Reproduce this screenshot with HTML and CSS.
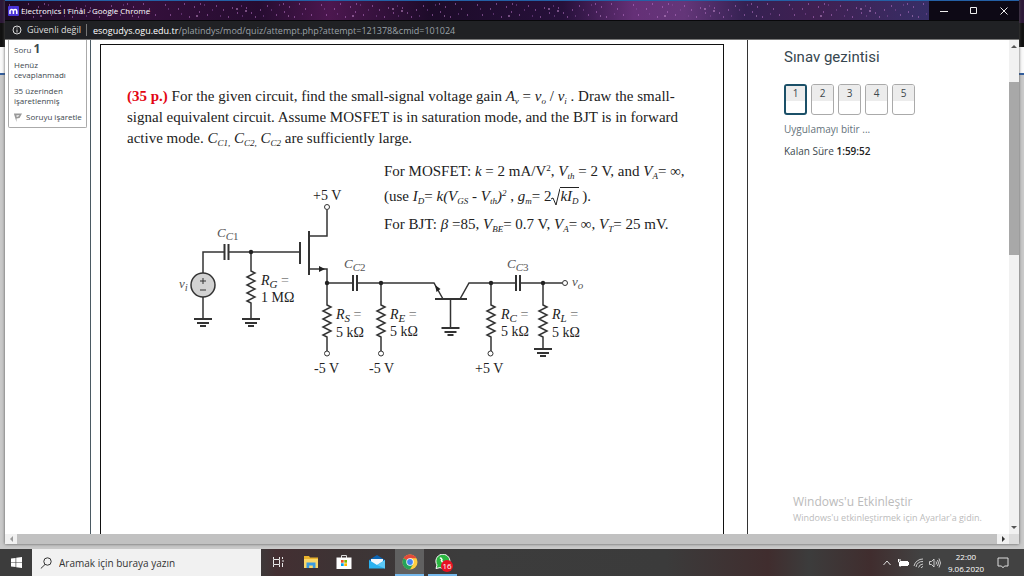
FILE: index.html
```html
<!DOCTYPE html>
<html lang="tr">
<head>
<meta charset="utf-8">
<title>Electronics I Final - Google Chrome</title>
<link rel="stylesheet" href="styles.css">
</head>
<body>
<div class="desktop">
  <div class="stage">
    <div class="window">
      <header class="titlebar">
        <svg class="stars" width="100%" height="19" aria-hidden="true">
          <defs>
            <pattern id="sky" width="156" height="19" patternUnits="userSpaceOnUse">
              <path d="M4 4h1M9 14h1M17 8h1M23 3h1M28 16h1M33 6h1M38 11h1M39 3h1M46 14h1M55 5h1M62 9h1M67 16h1M71 7h1M76 12h1M85 7h1M90 12h1M94 16h1M99 9h1M106 5h1M115 14h1M122 3h1M123 11h1M128 6h1M133 16h1M138 3h1M144 8h1M150 14h1" stroke="#c077cd" stroke-width="1"/>
              <path d="M7 8h1M20 13h1M43 4h1M51 9h1M59 15h1M80 5h1M81 15h1M102 15h1M110 9h1M118 4h1M141 13h1" stroke="#8a4f9e" stroke-width="1"/>
              <path d="M75 8h2M84 10h2M35 15h2M127 15h1" stroke="#c98fd0" stroke-width="1"/>
            </pattern>
          </defs>
          <rect width="100%" height="19" fill="url(#sky)"/>
        </svg>
        <svg class="favicon" viewBox="0 0 11 10" aria-hidden="true"><rect width="11" height="10" rx="1" fill="#4a35d8"/><path d="M2 8V5.300a1.700 1.700 0 0 1 3.400 0V8M5.400 5.300a1.700 1.700 0 0 1 3.400 0V8" fill="none" stroke="#fff" stroke-width="1.500"/></svg>
        <h1 class="window-title">Electronics I Final - Google Chrome</h1>
        <div class="window-buttons">
          <button type="button" aria-label="Minimize"><svg viewBox="0 0 8 8"><path d="M0 4.500h8"/></svg></button>
          <button type="button" aria-label="Maximize"><svg viewBox="0 0 8 8"><path d="M.5 .5h6v6h-6z"/></svg></button>
          <button type="button" aria-label="Close"><svg viewBox="0 0 8 8"><path d="M.5 .5l7 7M7.500 .5l-7 7"/></svg></button>
        </div>
      </header>
      <div class="addressbar">
        <svg class="info" viewBox="0 0 10 10" aria-hidden="true"><circle cx="5" cy="5" r="4" fill="none" stroke="#dcdcdc"/><path d="M5 4.500v3M5 2.500v1" stroke="#dcdcdc"/></svg>
        <span class="insecure">Güvenli değil</span>
        <span class="url"><b>esogudys.ogu.edu.tr</b>/platindys/mod/quiz/attempt.php?attempt=121378&amp;cmid=101024</span>
      </div>
      <div class="viewport">
        <aside class="info-column">
          <div class="info-card">
            <h2 class="question-no">Soru <strong>1</strong></h2>
            <p>Henüz cevaplanmadı</p>
            <p>35 üzerinden işaretlenmiş</p>
            <a class="flag" href="#flag"><svg viewBox="0 0 8 9" aria-hidden="true"><path d="M0 0.500h8L5.500 5 2.500 5.500V9L0 1z" fill="#999"/><path d="M2.500 2h3L4 4H2.500z" fill="#ddd"/></svg>Soruyu işaretle</a>
          </div>
        </aside>
        <main class="question-column">
          <article class="paper">
            <p class="prompt"><strong>(35 p.)</strong> For the given circuit, find the small-signal voltage gain <i>A<sub>v</sub></i> = <i>v<sub>o</sub></i> / <i>v<sub>i</sub></i> . Draw the small-<br>signal equivalent circuit. Assume MOSFET is in saturation mode, and the BJT is in forward<br>active mode. <i>C<sub>C1,</sub></i> <i>C<sub>C2,</sub></i> <i>C<sub>C2</sub></i> are sufficiently large.</p>
            <div class="figure">
              <svg class="circuit" viewBox="127 149 500 236" role="img" aria-label="Circuit">
                <defs>
                  <g id="gnd"><path d="M-9 0H9M-6 4H6M-3 7H3" stroke-width="2"/></g>
                </defs>
                <g class="wire">
                  <path d="M203 273V252H224M229 252H299M203 297V319"/>
                  <path d="M224.500 244V260M228.500 244V260M353 275V291M357 275V291M516 275V291M520 275V291" stroke-width="2"/>
                  <path d="M300 242V264M309 231V275" stroke-width="2"/>
                  <path d="M327 210V236H309M309 269H327V283H353M357 283H434L443 299M460 299L469 283H516M520 283H562"/>
                  <path d="M435 299H467" stroke-width="2"/>
                  <path d="M450.500 299V328"/>
                  <path d="M251 252V271l4 2-8 4 8 4-8 4 8 4-8 4 8 4-8 4 4 2V319"/>
                  <path d="M327 283V305l4 2-8 4 8 4-8 4 8 4-8 4 8 4-8 4 4 2V351"/>
                  <path d="M381 283V305l4 2-8 4 8 4-8 4 8 4-8 4 8 4-8 4 4 2V351"/>
                  <path d="M491 283V305l4 2-8 4 8 4-8 4 8 4-8 4 8 4-8 4 4 2V351"/>
                  <path d="M543 283V305l4 2-8 4 8 4-8 4 8 4-8 4 8 4-8 4 4 2V349"/>
                  <use href="#gnd" x="203" y="319"/><use href="#gnd" x="251" y="319"/><use href="#gnd" x="450.500" y="328"/><use href="#gnd" x="543" y="349"/>
                  <circle cx="203" cy="285" r="12" fill="#d2d2d2"/>
                  <path d="M200 281H206M203 278V284M200 290H206" stroke-width="1"/>
                  <g fill="#fff" stroke-width="1"><circle cx="327" cy="207" r="2.500"/><circle cx="327" cy="353.500" r="2.500"/><circle cx="381" cy="353.500" r="2.500"/><circle cx="490.500" cy="353.500" r="2.500"/><circle cx="565" cy="283" r="2.500"/></g>
                  <g fill="#222" stroke="none"><circle cx="251" cy="252" r="2.200"/><circle cx="327" cy="283" r="2.200"/><circle cx="381" cy="283" r="2.200"/><circle cx="491" cy="283" r="2.200"/><circle cx="543" cy="283" r="2.200"/><path d="M325 269l-6-3v6zM435 285l5.500 4-4 3z"/></g>
                </g>
                <g class="label">
                  <text x="313" y="200">+5 V</text><text x="314" y="373">-5 V</text><text x="369" y="373">-5 V</text><text x="475" y="373">+5 V</text>
                  <text x="261" y="285"><tspan class="it">R</tspan><tspan class="it sm" dy="3">G</tspan><tspan class="eq" dy="-3"> =</tspan></text><text x="261" y="302">1 MΩ</text>
                  <text x="336" y="319"><tspan class="it">R</tspan><tspan class="it sm" dy="3">S</tspan><tspan class="eq" dy="-3"> =</tspan></text><text x="336" y="337">5 kΩ</text>
                  <text x="390" y="319"><tspan class="it">R</tspan><tspan class="it sm" dy="3">E</tspan><tspan class="eq" dy="-3"> =</tspan></text><text x="390" y="336">5 kΩ</text>
                  <text x="501" y="319"><tspan class="it">R</tspan><tspan class="it sm" dy="3">C</tspan><tspan class="eq" dy="-3"> =</tspan></text><text x="501" y="336">5 kΩ</text>
                  <text x="552" y="319"><tspan class="it">R</tspan><tspan class="it sm" dy="3">L</tspan><tspan class="eq" dy="-3"> =</tspan></text><text x="552" y="337">5 kΩ</text>
                </g>
                <g class="label soft">
                  <text x="217" y="237"><tspan class="it">C</tspan><tspan class="it sm" dy="3">C</tspan><tspan class="sm">1</tspan></text>
                  <text x="344" y="268"><tspan class="it">C</tspan><tspan class="it sm" dy="3">C</tspan><tspan class="sm">2</tspan></text>
                  <text x="507" y="268"><tspan class="it">C</tspan><tspan class="it sm" dy="3">C</tspan><tspan class="sm">3</tspan></text>
                  <text x="179" y="288"><tspan class="it">v</tspan><tspan class="it sm" dy="3">i</tspan></text>
                  <text x="572" y="286"><tspan class="it">v</tspan><tspan class="it sm" dy="3">o</tspan></text>
                </g>
              </svg>
              <div class="formulas">
                <p>For MOSFET: <i>k</i> = 2 mA/V<sup>2</sup>, <i>V<sub>th</sub></i> = 2 V, and <i>V<sub>A</sub></i>= ∞,</p>
                <p>(use <i>I<sub>D</sub></i>= <i>k(V<sub>GS</sub></i> - <i>V<sub>th</sub>)<sup>2</sup></i> , <i>g<sub>m</sub></i>= 2<svg class="radical" viewBox="0 0 9 18" aria-hidden="true"><path d="M0 11l2-1 3 7L9 .5" fill="none" stroke="#222"/></svg><span class="radicand"><i>kI<sub>D</sub></i></span> ).</p>
                <p>For BJT: <i>β</i> =85, <i>V<sub>BE</sub></i>= 0.7 V, <i>V<sub>A</sub></i>= ∞, <i>V<sub>T</sub></i>= 25 mV.</p>
              </div>
            </div>
          </article>
        </main>
        <aside class="quiz-nav">
          <h2>Sınav gezintisi</h2>
          <nav class="pages">
            <a class="page current" href="#q1"><span>1</span></a>
            <a class="page" href="#q2"><span>2</span></a>
            <a class="page" href="#q3"><span>3</span></a>
            <a class="page" href="#q4"><span>4</span></a>
            <a class="page" href="#q5"><span>5</span></a>
          </nav>
          <a class="finish" href="#finish">Uygulamayı bitir ...</a>
          <p class="timer">Kalan Süre <b>1:59:52</b></p>
          <div class="watermark"><p class="big">Windows'u Etkinleştir</p><p>Windows'u etkinleştirmek için Ayarlar'a gidin.</p></div>
        </aside>
        <div class="vscroll"><i class="arrow up"></i><div class="vtrack"><div class="vthumb"></div></div><i class="arrow down"></i></div>
      </div>
      <div class="hscroll"><span class="hbutton"><i class="arrow left"></i></span><span class="hthumb"></span><span class="hbutton"><i class="arrow right"></i></span><span class="corner"></span></div>
    </div>
  </div>
  <footer class="taskbar">
    <button class="start" type="button" aria-label="Start"><svg viewBox="0 0 12 12"><path d="M0 1.700L5 1v4.600H0zM5.700.9L12 0v5.600H5.700zM0 6.300h5V11l-5-.7zM5.700 6.300H12V12l-6.300-.9z" fill="#fff"/></svg></button>
    <label class="search"><svg viewBox="0 0 12 12" aria-hidden="true"><circle cx="7.500" cy="4.500" r="3.700"/><path d="M5 7.500L.8 11.500"/></svg><input type="text" placeholder="Aramak için buraya yazın" aria-label="Aramak için buraya yazın"></label>
    <div class="apps">
      <button type="button" aria-label="Task view"><svg viewBox="0 0 16 16"><path d="M3.500 3v2.500h6V3M3.500 13v-2.500h6V13M3.500 6v4M9.500 6v4M12.500 3v2M12.500 9v4M12 7h2" fill="none" stroke="#e8e8e8"/></svg></button>
      <button type="button" aria-label="Explorer"><svg viewBox="0 0 16 16"><path d="M1 2h5l1 1.500h8V14H1z" fill="#e9b22c"/><path d="M1 5h14v9H1z" fill="#fbd768"/><path d="M3.500 14V8.500h9V14h-2.700v-2.500H6.200V14z" fill="#3b9be0"/></svg></button>
      <button type="button" aria-label="Store"><svg viewBox="0 0 16 16"><path d="M5.500 4V1.500h5V4" fill="none" stroke="#ddd"/><path d="M.5 3.500h15V15h-15z" fill="#fff"/><path d="M5 6h2.700v2.700H5z" fill="#f25022"/><path d="M8.300 6H11v2.700H8.300z" fill="#7fba00"/><path d="M5 9.300h2.700V12H5z" fill="#00a4ef"/><path d="M8.300 9.300H11V12H8.300z" fill="#ffb900"/></svg></button>
      <button type="button" aria-label="Mail"><svg viewBox="0 0 16 16"><path d="M0 6l8-5 8 5v8H0z" fill="#0b65b5"/><path d="M2 5h12v6H2z" fill="#f3f8fc"/><path d="M0 6l8 5 8-5v8.500H0z" fill="#2bb2f0"/><path d="M8 11l8-5v8.500z" fill="#5cc9f7"/></svg></button>
      <button type="button" class="open active" aria-label="Chrome"><svg viewBox="0 0 16 16"><circle cx="8" cy="8" r="7.500" fill="#ffcd40"/><path d="M8 8L1.500 4.250A7.500 7.500 0 0 1 14.500 4.250H8z" fill="#e24a3b"/><path d="M8 8L1.500 4.250A7.500 7.500 0 0 0 8 15.500L11.200 10z" fill="#26a35a"/><circle cx="8" cy="8" r="3.700" fill="#fff"/><circle cx="8" cy="8" r="2.900" fill="#4285f4"/></svg></button>
      <button type="button" class="open" aria-label="WhatsApp"><svg viewBox="0 0 16 16"><path d="M1 14.500L2 11A7 7 0 1 1 5 13.600z" fill="#2bb741" stroke="#fff"/><path d="M5 4.500c1-1 1.500 0 2 1.200l-.6 1c.7 1.200 1.500 2 2.700 2.500" fill="none" stroke="#fff" stroke-width="1.500"/></svg><span class="badge">16</span></button>
    </div>
    <div class="tray">
      <svg class="chevron" viewBox="0 0 8 8" aria-label="Hidden icons"><path d="M.5 6L4 2l3.500 4" fill="none" stroke="#ddd"/></svg>
      <svg viewBox="0 0 12 12" aria-label="Battery"><path d="M3 4h8v5H3zM11 5h1v3h-1z" fill="#fff"/><path d="M1 3h3M1.500 2v3h1V9H4" fill="none" stroke="#fff"/></svg>
      <svg viewBox="0 0 12 12" aria-label="Network"><path d="M1 9A9 9 0 0 1 10 2M3 10a7 7 0 0 1 7-5.500M5.500 10.500A5 5 0 0 1 10 7M8 11a3 3 0 0 1 2-1.500" fill="none" stroke="#ccc"/></svg>
      <svg viewBox="0 0 12 12" aria-label="Volume"><path d="M.5 4.500h2L5 2v8L2.500 7.500h-2zM7 4.500q1 1.500 0 3M8.500 3q2 3 0 6M10 1.500q3 4.500 0 9" fill="none" stroke="#ccc"/></svg>
      <time class="clock">22:00<br>9.06.2020</time>
      <svg class="notes" viewBox="0 0 12 12" aria-label="Notifications"><path d="M1 1h10v8H7.500L6 10.800 4.500 9H1z" fill="none" stroke="#ddd"/></svg>
    </div>
  </footer>
</div>
</body>
</html>
```

FILE: styles.css
```css
* { box-sizing: border-box; }
body, h1, h2, p { margin: 0; }
body { font-family: "Open Sans", "Noto Sans", sans-serif; font-size: 10px; color: #3c474d; }
button { border: 0; padding: 0; background: none; font: inherit; color: inherit; }
a { color: inherit; text-decoration: none; }
svg { display: block; flex: none; }

.desktop { display: flex; flex-direction: column; height: 100vh; overflow: hidden; }
.stage {
  flex: 1; min-height: 0; display: flex; padding: 0 5px 5px;
  background: linear-gradient(#2d1938 0 23px, #111 23px 47px, #fafafa 47px 73px, #315d9e 73px 75px, #c9c9c9 75px);
}
.window { flex: 1; min-width: 0; display: flex; flex-direction: column; background: #fff; box-shadow: 0 0 3px #555; }

.titlebar {
  position: relative; flex: none; display: flex; align-items: center; height: 20px; padding-left: 3px;
  border-top: 1px solid #2460a5;
  background: linear-gradient(90deg, #1c0a24, #35103c 13%, #260c30 25%, #4c174f 32%, #1d0b29 42%, #26103a 55%, #653077 62%, #643679 67%, #352152 73%, #402052 80%, #372e66 91%, #251b3c);
}
.stars { position: absolute; inset: 0; }
.favicon { position: relative; width: 11px; height: 10px; }
.window-title { position: relative; margin-left: 2px; font-size: 8px; font-weight: 400; line-height: 12px; color: #fff; flex: 1; }
.window-buttons { position: relative; display: flex; height: 19px; background: #0d0915; }
.window-buttons button { width: 30px; display: grid; place-items: center; }
.window-buttons svg { width: 8px; height: 8px; fill: none; stroke: #eee; }

.addressbar {
  flex: none; display: flex; align-items: center; height: 20px; padding-left: 7px;
  background: #202124; border-top: 1px solid #08080a; border-bottom: 1px solid #777; color: #9aa0a6; font-size: 9px; white-space: nowrap;
}
.info { width: 10px; height: 10px; }
.insecure { margin-left: 5px; padding-right: 5px; border-right: 1px solid #777; line-height: 12px; color: #ddd; }
.url { margin-left: 6px; }
.url b { font-weight: 400; color: #fff; }

.viewport { flex: 1; min-height: 0; display: grid; grid-template-columns: 86px 1fr 261px 10px; overflow: hidden; }
.info-column { padding: 0 3px; border-right: 1px solid #4b5a63; }
.info-card { height: 88px; padding: 2px 5px; border: 1px solid #aaa; border-top: 0; border-radius: 0 0 2px 2px; font-size: 8px; line-height: 10px; }
.info-card p { margin-bottom: 6px; }
.question-no { margin-bottom: 3px; font-size: 8px; font-weight: 400; line-height: 14px; }
.question-no strong { font-size: 12px; }
.flag { display: flex; align-items: center; gap: 4px; white-space: nowrap; }
.flag svg { width: 8px; height: 9px; }

.question-column { min-width: 0; display: flex; padding: 4px 23px 0 9px; border-right: 1px solid #333; }
.paper { flex: 1; min-width: 0; padding: 41px 20px 0 26px; border: solid #111; border-width: 1px 1px 0; font-family: "Liberation Serif", serif; font-size: 15px; color: #222; }
.prompt { line-height: 21px; white-space: nowrap; }
.prompt strong { color: #e30613; }
sub, sup { font-size: 9px; line-height: 0; }
sub { vertical-align: -3px; }
sup { vertical-align: 5px; }
.figure { display: grid; }
.circuit { grid-area: 1 / 1; width: 500px; height: 236px; }
.wire { fill: none; stroke: #333; stroke-width: 1.5; }
.label { fill: #222; font-size: 14px; }
.label .it { font-style: italic; }
.label .sm { font-size: 11px; }
.label .eq { fill: #777; }
.soft { fill: #555; font-size: 13px; }
.formulas { grid-area: 1 / 1; z-index: 1; display: flex; flex-direction: column; gap: 3px; align-items: flex-start; padding: 11px 0 0 257px; line-height: 22px; white-space: nowrap; }
.formulas p:last-child { margin-top: 3px; }
.radical { display: inline-block; width: 9px; height: 18px; vertical-align: -5px; }
.radicand { display: inline-block; line-height: 17px; border-top: 1px solid #222; }

.quiz-nav { position: relative; padding: 8px 0 0 36px; }
.quiz-nav h2 { font-family: Roboto, sans-serif; font-size: 15px; font-weight: 400; line-height: 18px; color: #37474f; }
.pages { display: flex; gap: 4px; margin: 18px 0 7px; }
.page { width: 23px; height: 31px; border: 1px solid #aaa; border-radius: 3px; overflow: hidden; text-align: center; }
.page span { display: block; height: 16px; line-height: 16px; background: #ececec; }
.page.current { border: 2px solid #1b5068; }
.page.current span { height: 15px; line-height: 14px; }
.finish { display: block; line-height: 15px; color: #64727a; }
.timer { margin-top: 7px; line-height: 15px; }
.timer b { font-weight: 600; color: #222; }
.watermark { position: absolute; left: 45px; bottom: 9px; color: #bbb; font-size: 9px; line-height: 15px; white-space: nowrap; }
.watermark .big { font-size: 12px; line-height: 17px; }

.vscroll { display: flex; flex-direction: column; align-items: center; background: #f1f1f1; padding: 5px 0; }
.vtrack { flex: 1; width: 100%; padding-top: 34px; }
.vthumb { height: 39%; background: #a8a8a8; }
.arrow { width: 0; height: 0; border: 3px solid transparent; }
.up { border-top: 0; border-bottom-color: #555; }
.down { border-bottom: 0; border-top-color: #555; }
.left { border-left: 0; border-right-color: #999; }
.right { border-right: 0; border-left-color: #333; }
.hscroll { flex: none; display: flex; height: 10px; background: #f1f1f1; }
.hbutton { width: 12px; display: grid; place-items: center; }
.hthumb { flex: 1; background: #c1c1c1; }
.corner { width: 10px; background: #dcdcdc; }

.taskbar { flex: none; display: flex; height: 27px; color: #fff; background: linear-gradient(90deg, #3c3c3c 25%, #432f32 27%, #3d3334 33%, #3c3c3c 45%, #3b3b3b 65%, #402d2e 75%, #3c3c3c 79%, #402d2e 85%, #424242 90%); }
.start { width: 32px; display: grid; place-items: center; }
.start svg { width: 11px; height: 11px; }
.search { width: 229px; display: flex; align-items: center; gap: 7px; padding-left: 8px; background: #f1f1f1; }
.search svg { width: 12px; height: 12px; fill: none; stroke: #333; }
.search input { flex: 1; min-width: 0; border: 0; padding: 0; background: none; font: inherit; color: #333; outline: 0; }
.search input::placeholder { color: #333; opacity: 1; }
.apps { display: flex; gap: 4px; padding-left: 2px; }
.apps button { position: relative; width: 29px; display: grid; place-items: center; border-bottom: 2px solid transparent; }
.apps svg { width: 16px; height: 16px; }
.apps .open { border-color: #76b9ed; }
.apps .active { background: #606060; }
.badge { position: absolute; left: 13px; top: 11px; width: 12px; height: 12px; border-radius: 6px; background: #e81123; font-size: 8px; line-height: 12px; text-align: center; }
.tray { margin-left: auto; display: flex; align-items: center; gap: 4px; padding-right: 15px; }
.tray svg { width: 12px; height: 12px; }
.tray .chevron { width: 8px; height: 8px; margin-right: 2px; }
.clock { width: 42px; font-size: 8px; line-height: 12px; text-align: center; }
.tray .notes { margin-left: 6px; }
```
